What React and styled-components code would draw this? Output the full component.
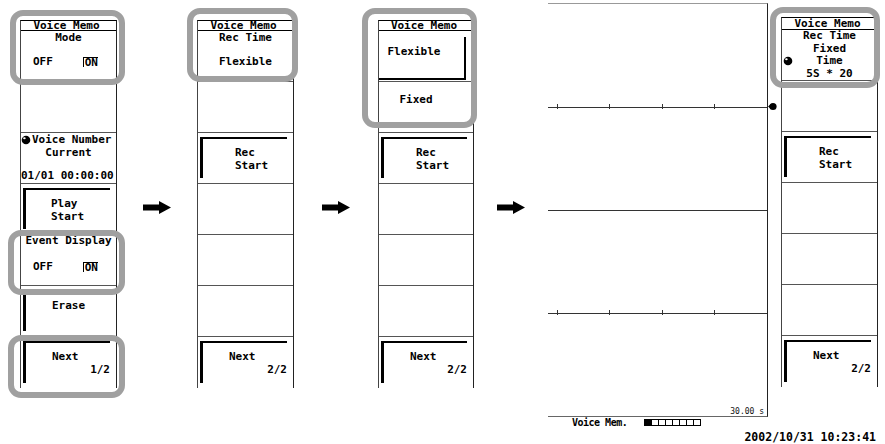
import React from 'react';
import styled, { createGlobalStyle } from 'styled-components';

const GlobalStyle = createGlobalStyle`
  html, body {
    margin: 0;
    padding: 0;
    background: #fff;
  }
  body {
    font-family: "DejaVu Sans Mono", "Liberation Mono", monospace;
  }
`;

const Page = styled.div`
  width: 885px;
  height: 444px;
  box-sizing: border-box;
  padding-left: 20px;
  display: flex;
  align-items: flex-start;
  overflow: hidden;
  background: #fff;
  color: #000;
`;

const Panel = styled.div`
  position: relative;
  flex-shrink: 0;
  width: ${p => p.$w || 97}px;
  margin-top: ${p => p.$top || 20}px;
  box-sizing: border-box;
  border-top: 1px solid #000;
  border-left: 1px solid #444;
  border-right: 1px solid #222;
  font: bold 11px "DejaVu Sans Mono", monospace;
`;

const Header = styled.div`
  height: ${p => p.$h || 10}px;
  box-sizing: border-box;
  border-bottom: 1px solid #000;
  line-height: ${p => (p.$h || 10) - 1}px;
  text-align: center;
  white-space: nowrap;
  padding-right: 4px;
`;

const Row = styled.div`
  height: 51px;
  box-sizing: border-box;
  border-bottom: ${p => (p.$last ? 'none' : '1px solid #555')};
  display: flex;
  flex-direction: column;
  padding-top: ${p => p.$pt || 0}px;
`;

const Line = styled.div`
  position: relative;
  height: ${p => p.$lh || 13}px;
  line-height: ${p => p.$lh || 13}px;
  margin-top: ${p => p.$mt || 0}px;
  padding-right: ${p => p.$pr || 0}px;
  padding-left: ${p => p.$pl || 0}px;
  display: flex;
  align-items: center;
  justify-content: ${p => p.$align || 'center'};
  white-space: pre;
  overflow: hidden;
`;

const OptionLine = styled.div`
  height: 13px;
  line-height: 13px;
  margin-top: ${p => p.$mt || 0}px;
  padding: 0 18px 0 12px;
  display: flex;
  align-items: center;
  justify-content: space-between;
`;

const Selected = styled.span`
  display: inline-block;
  line-height: 9px;
  padding-left: 1px;
  border-left: 1px solid #000;
  border-top: 1px solid #000;
`;

const Key = styled.div`
  flex: 1;
  margin: 4px 6px 5px 2px;
  border-top: 2px solid #000;
  border-left: 3px solid #000;
  display: flex;
  flex-direction: column;
  justify-content: center;
`;

const KeyText = styled.div`
  height: 13px;
  line-height: 13px;
  white-space: pre;
  padding-left: ${p => p.$pl || 26}px;
  text-align: ${p => p.$right ? 'right' : 'left'};
`;

const ChosenKey = styled.div`
  flex: 1;
  margin: 6px 7px 1px 0;
  border-right: 2px solid #000;
  border-bottom: 2px solid #000;
  padding: 8px 15px 0 0;
  line-height: 13px;
  text-align: center;
`;

const Highlight = styled.div`
  position: absolute;
  z-index: 2;
  left: ${p => p.$x}px;
  top: ${p => p.$y}px;
  width: ${p => p.$w}px;
  height: ${p => p.$h}px;
  box-sizing: border-box;
  border: 6px solid #a0a0a0;
  border-radius: 13px;
  pointer-events: none;
`;

const KnobMark = styled.svg`
  flex-shrink: 0;
  width: 10px;
  height: 10px;
  margin-right: 1px;
  ${p => p.$float && `
    position: absolute;
    left: 1px;
    top: 1px;
  `}
`;

const ArrowSlot = styled.div`
  flex-shrink: 0;
  width: ${p => p.$w}px;
  padding-top: 201px;
  display: flex;
  justify-content: center;
`;

const RightGroup = styled.div`
  flex-shrink: 0;
  display: flex;
  flex-direction: column;
`;

const TopRow = styled.div`
  display: flex;
  align-items: flex-start;
  gap: 13px;
`;

const Screen = styled.div`
  flex-shrink: 0;
  width: 220px;
  height: 414px;
  margin-top: 3px;
  box-sizing: border-box;
  border-top: 1px solid #999;
  border-right: 1px solid #222;
  border-bottom: 1px solid #666;
  display: flex;
  flex-direction: column;
`;

const Band = styled.div`
  position: relative;
  height: ${p => p.$h}px;
  box-sizing: border-box;
  border-bottom: ${p => (p.$last ? 'none' : '1px solid #333')};
  display: flex;
  justify-content: flex-end;
  align-items: flex-end;
`;

const Ticks = styled.svg`
  position: absolute;
  left: 0;
  bottom: -2px;
  width: 219px;
  height: 5px;
`;

const Marker = styled.svg`
  position: absolute;
  right: -10px;
  bottom: -4px;
  width: 9px;
  height: 9px;
`;

const RangeLabel = styled.div`
  font: 8px "DejaVu Sans Mono", monospace;
  line-height: 8px;
  padding-right: 3px;
  color: #111;
`;

const Status = styled.div`
  height: 11px;
  padding-left: 24px;
  display: flex;
  align-items: center;
  font: bold 10px "DejaVu Sans Mono", monospace;
  letter-spacing: -0.5px;
  white-space: pre;
`;

const Meter = styled.div`
  display: flex;
  margin-left: 17px;
`;

const Cell = styled.div`
  width: 8px;
  height: 7px;
  box-sizing: border-box;
  border: 1px solid #000;
  margin-left: ${p => (p.$first ? 0 : -1)}px;
  background: ${p => (p.$on ? '#000' : '#fff')};
`;

const DateLine = styled.div`
  margin-top: 2px;
  padding-right: 2px;
  height: 12px;
  line-height: 12px;
  text-align: right;
  font: bold 11.5px "DejaVu Sans Mono", monospace;
  white-space: pre;
`;

const Knob = ({ float }) => (
  <KnobMark $float={float} viewBox="0 0 10 10">
    <circle cx="5" cy="5" r="4.3" fill="#000" />
    <ellipse cx="3.4" cy="3.3" rx="1.3" ry="1" fill="#fff" />
  </KnobMark>
);

const Arrow = () => (
  <svg width="28" height="13" viewBox="0 0 28 13">
    <path d="M0 3.5 H16 V0 L28 6.5 L16 13 V9.5 H0 Z" fill="#000" />
  </svg>
);

const SoftKey = ({ top, bottom = '', pl }) => (
  <Key>
    <KeyText $pl={pl}>{top}</KeyText>
    <KeyText $pl={pl}>{bottom}</KeyText>
  </Key>
);

const NextKey = ({ page }) => (
  <Key>
    <KeyText>Next</KeyText>
    <KeyText $right>{page}</KeyText>
  </Key>
);

const Options = ({ mt }) => (
  <OptionLine $mt={mt}>
    <span>OFF</span>
    <Selected>ON</Selected>
  </OptionLine>
);

const EmptyRows = ({ count }) =>
  Array.from({ length: count }, (_, i) => <Row key={i} />);

const tickXs = [9.5, 61.5, 114.5, 166.5];

const Axis = () => (
  <Ticks viewBox="0 0 219 5">
    {tickXs.map(x => (
      <line key={x} x1={x} y1="0" x2={x} y2="5" stroke="#333" strokeWidth="1" />
    ))}
  </Ticks>
);

export default function App() {
  return (
    <>
      <GlobalStyle />
      <Page>
        <Panel>
          <Header>Voice Memo</Header>
          <Row>
            <Line>Mode</Line>
            <Options mt={11} />
          </Row>
          <Row />
          <Row>
            <Line $align="flex-start">
              <Knob />
              Voice Number
            </Line>
            <Line>Current</Line>
            <Line $mt={10} $align="flex-start">01/01 00:00:00</Line>
          </Row>
          <Row>
            <SoftKey top="Play" bottom="Start" pl={25} />
          </Row>
          <Row>
            <Line $mt={-1}>Event Display</Line>
            <Options mt={13} />
          </Row>
          <Row>
            <SoftKey top="Erase" />
          </Row>
          <Row $last>
            <NextKey page="1/2" />
          </Row>
          <Highlight $x={-11} $y={-11} $w={115} $h={75} />
          <Highlight $x={-13} $y={209} $w={117} $h={65} />
          <Highlight $x={-13} $y={314} $w={117} $h={63} />
        </Panel>

        <ArrowSlot $w={80}>
          <Arrow />
        </ArrowSlot>

        <Panel>
          <Header>Voice Memo</Header>
          <Row>
            <Line>Rec Time</Line>
            <Line $mt={11}>Flexible</Line>
          </Row>
          <Row />
          <Row>
            <SoftKey top="Rec" bottom="Start" pl={32} />
          </Row>
          <EmptyRows count={3} />
          <Row $last>
            <NextKey page="2/2" />
          </Row>
          <Highlight $x={-11} $y={-13} $w={111} $h={74} />
        </Panel>

        <ArrowSlot $w={84}>
          <Arrow />
        </ArrowSlot>

        <Panel $w={96}>
          <Header>Voice Memo</Header>
          <Row>
            <ChosenKey>Flexible</ChosenKey>
          </Row>
          <Row $pt={11}>
            <Line $pr={20}>Fixed</Line>
          </Row>
          <Row>
            <SoftKey top="Rec" bottom="Start" pl={32} />
          </Row>
          <EmptyRows count={3} />
          <Row $last>
            <NextKey page="2/2" />
          </Row>
          <Highlight $x={-17} $y={-13} $w={115} $h={120} />
        </Panel>

        <ArrowSlot $w={74}>
          <Arrow />
        </ArrowSlot>

        <RightGroup>
          <TopRow>
            <Screen>
              <Band $h={104}>
                <Axis />
                <Marker viewBox="0 0 9 9">
                  <path d="M0 4.5 L3 2 L3 7 Z" fill="#000" />
                  <circle cx="5" cy="4.5" r="3.6" fill="#000" />
                </Marker>
              </Band>
              <Band $h={103} />
              <Band $h={103}>
                <Axis />
              </Band>
              <Band $h={102} $last>
                <RangeLabel>30.00 s</RangeLabel>
              </Band>
            </Screen>

            <Panel $top={17}>
              <Header $h={12}>Voice Memo</Header>
              <Row>
                <Line $lh={12.5}>Rec Time</Line>
                <Line $lh={12.5}>Fixed</Line>
                <Line $lh={12.5}>
                  <Knob float />
                  Time
                </Line>
                <Line $lh={12.5}>5S * 20</Line>
              </Row>
              <Row />
              <Row>
                <SoftKey top="Rec" bottom="Start" pl={32} />
              </Row>
              <EmptyRows count={3} />
              <Row $last>
                <NextKey page="2/2" />
              </Row>
              <Highlight $x={-12} $y={-11} $w={110} $h={81} />
            </Panel>
          </TopRow>

          <Status>
            Voice Mem.
            <Meter>
              {Array.from({ length: 8 }, (_, i) => (
                <Cell key={i} $first={i === 0} $on={i === 0} />
              ))}
            </Meter>
          </Status>
          <DateLine>2002/10/31 10:23:41</DateLine>
        </RightGroup>
      </Page>
    </>
  );
}
